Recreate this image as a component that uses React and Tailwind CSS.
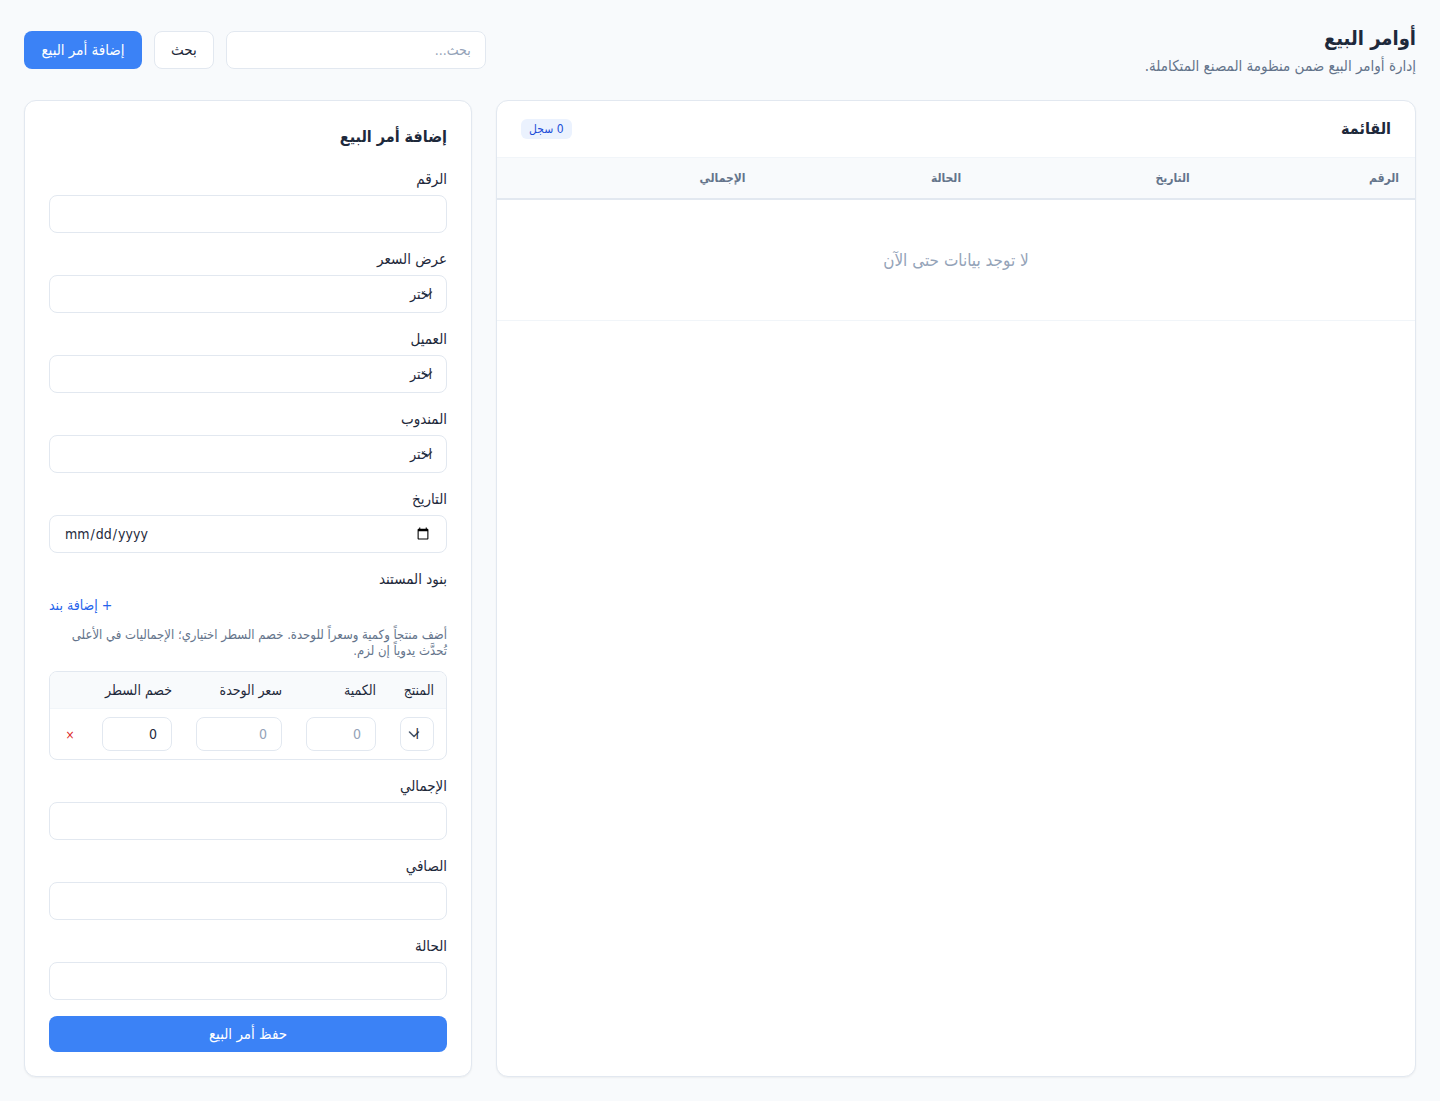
import { useState } from "react";

const inputClass =
  "relative block w-full rounded-lg border border-[#e2e8f0] px-3.5 text-sm text-[#1e293b] placeholder:text-[#94a3b8] outline-none focus:border-[#3b82f6]";

const Select = ({ id, label, size }) => (
  <div className="relative">
    <svg
      className="absolute top-1/2 right-3 h-4 w-4 -translate-y-1/2"
      viewBox="0 0 16 16"
      fill="none"
      stroke="#475569"
      strokeWidth="1.6"
      strokeLinecap="round"
      strokeLinejoin="round"
    >
      <path d="M3.5 6l4.5 4.5L12.5 6" />
    </svg>
    <select id={id} aria-label={label} className={`${inputClass} ${size} appearance-none bg-transparent`}>
      <option value="">اختر</option>
    </select>
  </div>
);

const Field = ({ id, label, children }) => (
  <div>
    <label htmlFor={id} className="mb-1.5 block text-[15px] leading-5 font-medium">
      {label}
    </label>
    {children}
  </div>
);

const TextField = ({ id, label }) => (
  <Field id={id} label={label}>
    <input id={id} type="text" className={`${inputClass} h-[38px]`} />
  </Field>
);

const SelectField = ({ id, label }) => (
  <Field id={id} label={label}>
    <Select id={id} size="h-[38px]" />
  </Field>
);

const columns = [
  { label: "الرقم", width: "w-[22.8%]" },
  { label: "التاريخ", width: "w-[24.9%]" },
  { label: "الحالة", width: "w-[23.5%]" },
  { label: "الإجمالي", width: "w-[20.8%]" },
  { label: "", width: "w-[8%]" },
];

const OrdersList = () => (
  <section className="col-span-2 overflow-hidden rounded-xl border border-[#e2e8f0] bg-white shadow-xs">
    <div className="flex h-14 items-center justify-between px-6">
      <h2 className="text-base font-bold">القائمة</h2>
      <span className="rounded-md bg-[#ebf2fe] px-2 py-0.5 text-xs font-medium text-[#1d4ed8]">
        0 سجل
      </span>
    </div>
    <table className="w-full table-fixed border-t border-[#f1f5f9]">
      <thead>
        <tr className="border-b-2 border-[#e2e8f0] bg-[#f8fafc]">
          {columns.map((col, i) => (
            <th
              key={i}
              className={`${col.width} px-4 py-3 text-right text-xs font-bold text-[#64748b]`}
            >
              {col.label}
            </th>
          ))}
        </tr>
      </thead>
      <tbody>
        <tr className="border-b border-[#f1f5f9]">
          <td
            colSpan={columns.length}
            className="px-4 py-12 text-center text-[17px] leading-6 text-[#94a3b8]"
          >
            لا توجد بيانات حتى الآن
          </td>
        </tr>
      </tbody>
    </table>
  </section>
);

const LineItems = () => {
  const [items, setItems] = useState([{ id: 1 }]);

  const addItem = () => setItems([...items, { id: Date.now() }]);
  const removeItem = (id) => setItems(items.filter((item) => item.id !== id));

  return (
    <div>
      <h3 className="mb-1.5 text-[15px] leading-5 font-medium">بنود المستند</h3>
      <div className="flex justify-end">
        <button type="button" onClick={addItem} className="text-sm text-[#2563eb]">
          + إضافة بند
        </button>
      </div>
      <p className="mt-3 text-[13px] leading-4 text-[#64748b]">
        أضف منتجاً وكمية وسعراً للوحدة. خصم السطر اختياري؛ الإجماليات في الأعلى تُحدَّث يدوياً إن لزم.
      </p>
      <div className="mt-3 overflow-hidden rounded-lg border border-[#e2e8f0]">
        <table className="w-full table-fixed text-sm">
          <thead className="border-b border-[#f1f5f9] bg-[#f8fafc]">
            <tr className="text-right">
              <th className="px-3 py-2 font-normal whitespace-nowrap">المنتج</th>
              <th className="w-[94px] px-3 py-2 font-normal whitespace-nowrap">الكمية</th>
              <th className="w-[110px] px-3 py-2 font-normal whitespace-nowrap">سعر الوحدة</th>
              <th className="w-[94px] px-3 py-2 font-normal whitespace-nowrap">خصم السطر</th>
              <th className="w-10"></th>
            </tr>
          </thead>
          <tbody>
            {items.map((item) => (
              <tr key={item.id}>
                <td className="px-3 py-2">
                  <Select label="المنتج" size="h-[34px]" />
                </td>
                <td className="px-3 py-2">
                  <input aria-label="الكمية" placeholder="0" className={`${inputClass} h-[34px]`} />
                </td>
                <td className="px-3 py-2">
                  <input aria-label="سعر الوحدة" placeholder="0" className={`${inputClass} h-[34px]`} />
                </td>
                <td className="px-3 py-2">
                  <input aria-label="خصم السطر" defaultValue="0" className={`${inputClass} h-[34px]`} />
                </td>
                <td className="text-center">
                  <button
                    type="button"
                    aria-label="حذف البند"
                    onClick={() => removeItem(item.id)}
                    className="text-xs text-[#dc2626]"
                  >
                    ×
                  </button>
                </td>
              </tr>
            ))}
          </tbody>
        </table>
      </div>
    </div>
  );
};

const OrderForm = () => (
  <section className="rounded-xl border border-[#e2e8f0] bg-white p-6 shadow-xs">
    <h2 className="mb-5 text-base font-bold">إضافة أمر البيع</h2>
    <form className="flex flex-col gap-4" onSubmit={(e) => e.preventDefault()}>
      <TextField id="number" label="الرقم" />
      <SelectField id="quotation" label="عرض السعر" />
      <SelectField id="customer" label="العميل" />
      <SelectField id="salesman" label="المندوب" />
      <Field id="date" label="التاريخ">
        <input id="date" type="date" dir="ltr" className={`${inputClass} h-[38px]`} />
      </Field>
      <LineItems />
      <TextField id="total" label="الإجمالي" />
      <TextField id="net" label="الصافي" />
      <TextField id="status" label="الحالة" />
      <button
        type="submit"
        className="h-9 rounded-lg bg-[#3b82f6] text-[15px] font-medium text-white hover:bg-[#2563eb]"
      >
        حفظ أمر البيع
      </button>
    </form>
  </section>
);

const App = () => (
  <div
    dir="rtl"
    lang="ar"
    className="min-h-screen bg-[#f8fafc] p-6 font-['DejaVu_Sans_Condensed','DejaVu_Sans',sans-serif] text-[#1e293b]"
  >
    <header className="mb-6 flex items-center justify-between">
      <div>
        <h1 className="text-xl font-bold">أوامر البيع</h1>
        <p className="mt-1 text-[15px] leading-5 text-[#64748b]">
          إدارة أوامر البيع ضمن منظومة المصنع المتكاملة.
        </p>
      </div>
      <div className="flex gap-3">
        <div className="w-[260px] rounded-lg bg-white">
          <input
            type="search"
            aria-label="بحث"
            placeholder="بحث..."
            className={`${inputClass} h-[38px]`}
          />
        </div>
        <button
          type="button"
          className="h-[38px] rounded-lg border border-[#e2e8f0] bg-white px-4 text-[15px] font-medium"
        >
          بحث
        </button>
        <button
          type="button"
          className="h-[38px] min-w-[118px] rounded-lg bg-[#3b82f6] px-4 text-[15px] font-medium text-white hover:bg-[#2563eb]"
        >
          إضافة أمر البيع
        </button>
      </div>
    </header>
    <main className="grid grid-cols-3 gap-6">
      <OrdersList />
      <OrderForm />
    </main>
  </div>
);

export default App;
